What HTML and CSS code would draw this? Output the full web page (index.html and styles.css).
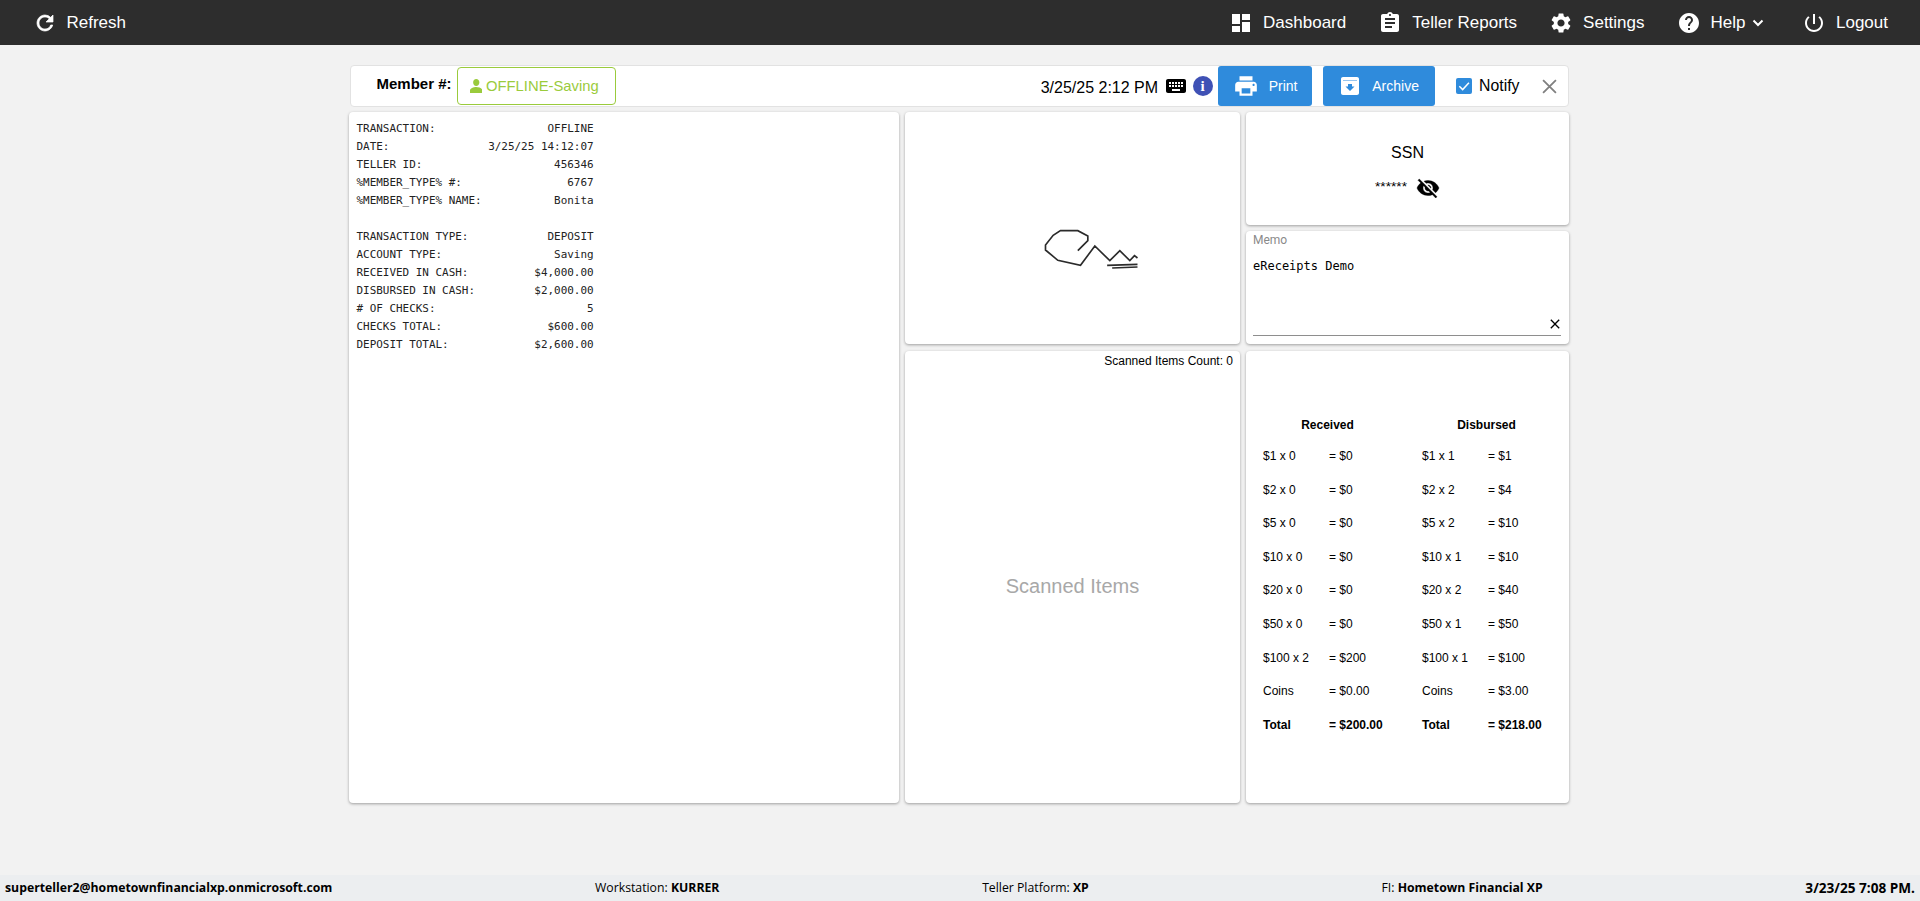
FILE: index.html
```html
<!DOCTYPE html>
<html lang="en">
<head>
<meta charset="utf-8">
<title>Teller</title>
<link rel="stylesheet" href="styles.css">
</head>
<body>
<nav class="nav">
  <a class="nav-item"><svg class="nav-icon bold" viewBox="0 0 24 24"><path d="M17.65 6.35A7.958 7.958 0 0 0 12 4c-4.42 0-7.99 3.58-7.99 8s3.57 8 7.99 8c3.73 0 6.84-2.55 7.73-6h-2.08A5.99 5.99 0 0 1 12 18c-3.31 0-6-2.69-6-6s2.69-6 6-6c1.66 0 3.14.69 4.22 1.78L13 11h7V4l-2.35 2.35z"/></svg>Refresh</a>
  <div class="nav-right">
    <a class="nav-item"><svg class="nav-icon" viewBox="0 0 24 24"><path d="M3 3h8v10H3zM13 3h8v6h-8zM13 11h8v10h-8zM3 15h8v6H3z"/></svg>Dashboard</a>
    <a class="nav-item"><svg class="nav-icon" viewBox="0 0 24 24"><path d="M19 3h-4.18C14.4 1.84 13.3 1 12 1c-1.3 0-2.4.84-2.82 2H5c-1.1 0-2 .9-2 2v14c0 1.1.9 2 2 2h14c1.1 0 2-.9 2-2V5c0-1.1-.9-2-2-2zm-7 0c.55 0 1 .45 1 1s-.45 1-1 1-1-.45-1-1 .45-1 1-1zm2 14H7v-2h7v2zm3-4H7v-2h10v2zm0-4H7V7h10v2z"/></svg>Teller Reports</a>
    <a class="nav-item"><svg class="nav-icon" viewBox="0 0 24 24"><path d="M19.14 12.94c.04-.3.06-.61.06-.94 0-.32-.02-.64-.07-.94l2.03-1.58a.49.49 0 0 0 .12-.61l-1.92-3.32a.488.488 0 0 0-.59-.22l-2.39.96c-.5-.38-1.03-.7-1.62-.94l-.36-2.54a.484.484 0 0 0-.48-.41h-3.84c-.24 0-.43.17-.47.41l-.36 2.54c-.59.24-1.13.57-1.62.94l-2.39-.96c-.22-.08-.47 0-.59.22L2.74 8.87c-.12.21-.08.47.12.61l2.03 1.58c-.05.3-.09.63-.09.94s.02.64.07.94l-2.03 1.58a.49.49 0 0 0-.12.61l1.92 3.32c.12.22.37.29.59.22l2.39-.96c.5.38 1.03.7 1.62.94l.36 2.54c.05.24.24.41.48.41h3.84c.24 0 .44-.17.47-.41l.36-2.54c.59-.24 1.13-.56 1.62-.94l2.39.96c.22.08.47 0 .59-.22l1.92-3.32c.12-.22.07-.47-.12-.61l-2.01-1.58zM12 15.6c-1.98 0-3.6-1.62-3.6-3.6s1.62-3.6 3.6-3.6 3.6 1.62 3.6 3.6-1.62 3.6-3.6 3.6z"/></svg>Settings</a>
    <a class="nav-item help"><svg class="nav-icon" viewBox="0 0 24 24"><path d="M12 2C6.48 2 2 6.48 2 12s4.48 10 10 10 10-4.48 10-10S17.52 2 12 2zm1 17h-2v-2h2v2zm2.07-7.75l-.9.92C13.45 12.9 13 13.5 13 15h-2v-.5c0-1.1.45-2.1 1.17-2.83l1.24-1.26c.37-.36.59-.86.59-1.41 0-1.1-.9-2-2-2s-2 .9-2 2H8c0-2.21 1.79-4 4-4s4 1.79 4 4c0 .88-.36 1.68-.93 2.25z"/></svg>Help<svg class="chevron" viewBox="0 0 12 8"><path d="M1.5 1.5 6 6l4.5-4.5"/></svg></a>
    <a class="nav-item"><svg class="nav-icon" viewBox="0 0 24 24"><path d="M13 3h-2v10h2V3zm4.83 2.17l-1.42 1.42C17.99 7.86 19 9.81 19 12c0 3.87-3.13 7-7 7s-7-3.13-7-7c0-2.19 1.01-4.14 2.58-5.42L6.17 5.17C4.23 6.82 3 9.26 3 12c0 4.97 4.03 9 9 9s9-4.03 9-9c0-2.74-1.23-5.18-3.17-6.83z"/></svg>Logout</a>
  </div>
</nav>

<main class="main">
  <header class="toolbar">
    <span class="member-label">Member #:</span>
    <span class="member-tag"><svg class="person" viewBox="3 2 18 20"><path d="M12 12c2.6 0 4.5-2.2 4.5-5S14.6 2 12 2 7.5 4.2 7.5 7s1.9 5 4.5 5zm0 1.5c-4 0-9 1.9-9 5V22h18v-3.5c0-3.1-5-5-9-5z"/></svg>OFFLINE-Saving</span>
    <span class="toolbar-date">3/25/25 2:12 PM</span>
    <svg class="kbd" viewBox="2 5 20 14"><path d="M20 5H4c-1.1 0-1.99.9-1.99 2L2 17c0 1.1.9 2 2 2h16c1.1 0 2-.9 2-2V7c0-1.1-.9-2-2-2zm-9 3h2v2h-2V8zm0 3h2v2h-2v-2zM8 8h2v2H8V8zm0 3h2v2H8v-2zm-1 2H5v-2h2v2zm0-3H5V8h2v2zm9 7H8v-2h8v2zm0-4h-2v-2h2v2zm0-3h-2V8h2v2zm3 3h-2v-2h2v2zm0-3h-2V8h2v2z"/></svg>
    <span class="info">i</span>
    <button class="btn print"><svg class="btn-icon print-icon" viewBox="0 0 24 24"><path d="M19 8H5c-1.66 0-3 1.34-3 3v6h4v4h12v-4h4v-6c0-1.66-1.34-3-3-3zm-3 11H8v-5h8v5zm3-7c-.55 0-1-.45-1-1s.45-1 1-1 1 .45 1 1-.45 1-1 1zm-1-9H6v4h12V3z"/></svg>Print</button>
    <button class="btn archive"><svg class="btn-icon" viewBox="0 0 24 24"><path d="M5 3h14c1.1 0 2 .9 2 2v14c0 1.1-.9 2-2 2H5c-1.1 0-2-.9-2-2V5c0-1.1.9-2 2-2zm0 3.5V7h14v-.5zM12 17l4.5-4.5H14V10h-4v2.5H7.5z" fill-rule="evenodd"/></svg>Archive</button>
    <span class="check"><svg viewBox="0 0 12 12"><path d="M2.5 6.2 5 8.7l4.7-5.200"/></svg></span>
    <span class="notify">Notify</span>
    <svg class="close" viewBox="0 0 14 14"><path d="M1 1l12 12M13 1 1 13"/></svg>
  </header>

  <section class="board">
    <article class="card receipt"><pre class="receipt-text">TRANSACTION:                 OFFLINE
DATE:               3/25/25 14:12:07
TELLER ID:                    456346
%MEMBER_TYPE% #:                6767
%MEMBER_TYPE% NAME:           Bonita

TRANSACTION TYPE:            DEPOSIT
ACCOUNT TYPE:                 Saving
RECEIVED IN CASH:          $4,000.00
DISBURSED IN CASH:         $2,000.00
# OF CHECKS:                       5
CHECKS TOTAL:                $600.00
DEPOSIT TOTAL:             $2,600.00</pre></article>

    <article class="card signature">
      <svg class="sig" viewBox="953.5 157 238 142"><g transform="translate(1000 200) scale(.3333)"><path d="M232 152 262 122V108L232 92H180L158 106 135 135V150L172 181 240 196 283 138 328 182 358 152 388 182 402 167 411 174"/><path d="M320 196 411 193M335 204 411 201"/></g></svg>
    </article>

    <article class="card ssn">
      <div class="ssn-title">SSN</div>
      <div class="ssn-value"><span>******</span><svg viewBox="0 0 24 24"><path d="M12 7c2.76 0 5 2.24 5 5 0 .65-.13 1.26-.36 1.83l2.92 2.92c1.51-1.26 2.7-2.89 3.43-4.75-1.73-4.39-6-7.5-11-7.5-1.4 0-2.74.25-3.98.7l2.16 2.16C10.74 7.13 11.35 7 12 7zM2 4.27l2.28 2.28.46.46C3.08 8.3 1.78 10.02 1 12c1.73 4.39 6 7.5 11 7.5 1.55 0 3.03-.3 4.38-.84l.42.42L19.73 22 21 20.73 3.27 3 2 4.27zM7.53 9.8l1.55 1.55c-.05.21-.08.43-.08.65 0 1.66 1.34 3 3 3 .22 0 .44-.03.65-.08l1.55 1.55c-.67.33-1.41.53-2.2.53-2.76 0-5-2.24-5-5 0-.79.2-1.53.53-2.2zm4.31-.78l3.15 3.15.02-.16c0-1.66-1.34-3-3-3l-.17.01z"/></svg></div>
    </article>

    <article class="card memo">
      <div class="memo-label">Memo</div>
      <div class="memo-text">eReceipts Demo</div>
      <svg class="memo-clear" viewBox="0 0 24 24"><path d="M19 6.41 17.59 5 12 10.59 6.41 5 5 6.41 10.59 12 5 17.59 6.41 19 12 13.41 17.59 19 19 17.59 13.41 12z"/></svg>
    </article>

    <article class="card scanned">
      <div class="scan-count">Scanned Items Count: 0</div>
      <div class="scan-empty">Scanned Items</div>
    </article>

    <article class="card cash">
      <div class="cash-grid">
        <b class="head">Received</b><b class="head">Disbursed</b>
        <span>$1 x 0</span><span>= $0</span><span>$1 x 1</span><span>= $1</span>
        <span>$2 x 0</span><span>= $0</span><span>$2 x 2</span><span>= $4</span>
        <span>$5 x 0</span><span>= $0</span><span>$5 x 2</span><span>= $10</span>
        <span>$10 x 0</span><span>= $0</span><span>$10 x 1</span><span>= $10</span>
        <span>$20 x 0</span><span>= $0</span><span>$20 x 2</span><span>= $40</span>
        <span>$50 x 0</span><span>= $0</span><span>$50 x 1</span><span>= $50</span>
        <span>$100 x 2</span><span>= $200</span><span>$100 x 1</span><span>= $100</span>
        <span>Coins</span><span>= $0.00</span><span>Coins</span><span>= $3.00</span>
        <b>Total</b><b>= $200.00</b><b>Total</b><b>= $218.00</b>
      </div>
    </article>
  </section>
</main>

<footer class="footer">
  <b>superteller2@hometownfinancialxp.onmicrosoft.com</b>
  <span>Workstation: <b>KURRER</b></span>
  <span>Teller Platform: <b>XP</b></span>
  <span class="footer-fi">FI: <b>Hometown Financial XP</b></span>
  <b class="footer-date">3/23/25 7:08 PM.</b>
</footer>
</body>
</html>
```

FILE: styles.css
```css
* { box-sizing: border-box; }
html, body { height: 100%; }
body {
  margin: 0;
  height: 901px;
  overflow: hidden;
  display: flex;
  flex-direction: column;
  background: #f2f2f2;
  color: #000;
  font-family: "Liberation Sans", Arial, sans-serif;
}

/* top bar */
.nav {
  height: 45px;
  flex: none;
  display: flex;
  align-items: center;
  justify-content: space-between;
  background: #2d2d2d;
  color: #fff;
  padding: 0 32px 0 32.5px;
}
.nav-right { display: flex; align-items: center; gap: 32px; }
.nav-item {
  display: flex;
  align-items: center;
  gap: 10px;
  font-size: 17px;
  line-height: 45px;
  white-space: nowrap;
}
.help { margin-right: 6px; }
.nav-icon { width: 24px; height: 24px; fill: #fff; flex: none; }
.nav-icon.bold { stroke: #fff; stroke-width: .7; }
.chevron {
  width: 12px;
  height: 8px;
  margin-left: -3.5px;
  fill: none;
  stroke: #fff;
  stroke-width: 2;
}

/* page body */
.main {
  flex: 1;
  width: 1222px;
  margin: 0 auto;
  padding-top: 20px;
}

/* toolbar */
.toolbar {
  height: 42px;
  margin: 0 2px 5px 1px;
  display: flex;
  align-items: center;
  background: #fff;
  border: 1px solid #e2e2e2;
  border-radius: 4px;
}
.member-label {
  margin-left: 25.5px;
  font-size: 15px;
  font-weight: bold;
  line-height: 36px;
  align-self: flex-start;
}
.member-tag {
  margin-left: 5.5px;
  width: 159px;
  height: 38px;
  display: flex;
  align-items: center;
  padding-left: 11.5px;
  gap: 4px;
  border: 1px solid #9acb3c;
  border-radius: 4px;
  color: #9acb3c;
  font-size: 14.8px;
}
.person { width: 12.5px; height: 14px; fill: #9acb3c; }
.toolbar-date { margin-left: auto; font-size: 16px; padding-top: 3px; }
.kbd { width: 20px; height: 14px; margin-left: 8px; fill: #000; }
.info {
  width: 20px;
  height: 20px;
  margin-left: 6.5px;
  border-radius: 50%;
  background: #3f51b5;
  color: #fff;
  font: bold 15px/20px "Liberation Serif", serif;
  text-align: center;
}
.btn {
  height: 40px;
  padding: 0;
  display: flex;
  align-items: center;
  justify-content: center;
  gap: 10px;
  border: 0;
  border-radius: 3px;
  background: #2f8bdc;
  color: #fff;
  font: 14px "Liberation Sans", Arial, sans-serif;
}
.print { width: 94px; margin-left: 5.5px; }
.archive { width: 112px; margin-left: 10.5px; }
.btn-icon { width: 24px; height: 24px; fill: #fff; }
.print-icon { width: 26px; height: 26px; }
.check {
  width: 16px;
  height: 16px;
  margin-left: 21px;
  border-radius: 2px;
  background: #2f8bdc;
}
.check svg { display: block; width: 16px; height: 16px; fill: none; stroke: #fff; stroke-width: 1.1; }
.notify { margin-left: 7.5px; font-size: 15.8px; }
.close { width: 15px; height: 15px; margin: 0 11.5px 0 22px; fill: none; stroke: #808080; stroke-width: 1.7; }

/* card grid */
.board {
  display: grid;
  grid-template-columns: 550px 335px 323px;
  grid-template-rows: 113px 113px 453px;
  gap: 6px;
  width: 1220px;
}
.card {
  background: #fff;
  border-radius: 4px;
  box-shadow: 0 1px 3px rgba(0,0,0,.35);
}
.receipt { grid-column: 1; grid-row: 1 / 4; padding: 8px 7.5px; }
.receipt-text {
  margin: 0;
  font: 10.95px/18px "DejaVu Sans Mono", monospace;
  color: #222;
}
.signature {
  grid-column: 2;
  grid-row: 1 / 3;
  display: flex;
  align-items: center;
  justify-content: center;
}
.sig { width: 238px; height: 142px; fill: none; stroke: #2b2b2b; stroke-width: 5; }

.ssn { grid-column: 3; grid-row: 1; text-align: center; padding-top: 31px; }
.ssn-title { font-size: 16px; line-height: 20px; }
.ssn-value {
  margin-top: 13px;
  display: flex;
  align-items: center;
  justify-content: center;
  gap: 9px;
  font-size: 13.7px;
}
.ssn-value span { position: relative; top: -2px; }
.ssn-value svg { width: 24px; height: 24px; fill: #000; stroke: #000; stroke-width: .4; }

.memo {
  grid-column: 3;
  grid-row: 2;
  position: relative;
  padding: 2px 7px;
}
.memo-label { font: 12px/14px Roboto, sans-serif; color: #8a8a8a; }
.memo-text { margin-top: 12px; font: 12px/14px "DejaVu Sans Mono", monospace; }
.memo::after {
  content: "";
  position: absolute;
  left: 7px;
  right: 8px;
  bottom: 8px;
  border-bottom: 1px solid #8e8e8e;
}
.memo-clear { position: absolute; right: 6px; bottom: 12px; width: 16px; height: 16px; fill: #000; }

.scanned {
  grid-column: 2;
  grid-row: 3;
  margin-top: 1px;
  display: flex;
  flex-direction: column;
}
.scan-count { padding: 3px 7px 0 0; text-align: right; font-size: 12px; line-height: 14px; }
.scan-empty {
  flex: 1;
  display: flex;
  align-items: center;
  justify-content: center;
  padding-top: 2px;
  color: #a8a8a8;
  font-size: 20px;
}

.cash { grid-column: 3; grid-row: 3; margin-top: 1px; padding: 67px 0 0 17px; }
.cash-grid {
  display: grid;
  grid-template-columns: 66px 93px 66px 93px;
  grid-template-rows: 31px;
  grid-auto-rows: 33.6px;
  font-size: 12px;
  line-height: 14px;
}
.cash-grid > * { white-space: nowrap; }
.head { grid-column: span 2; text-align: center; padding-right: 30px; }

/* footer */
.footer {
  height: 26px;
  flex: none;
  display: flex;
  align-items: center;
  justify-content: space-between;
  padding: 0 5px;
  background: #eceef0;
  font: 12.25px/26px "Open Sans", sans-serif;
}
.footer b { font-weight: 700; }
.footer-fi { margin-left: 30px; }
.footer-date { font-size: 13.6px; }
```
